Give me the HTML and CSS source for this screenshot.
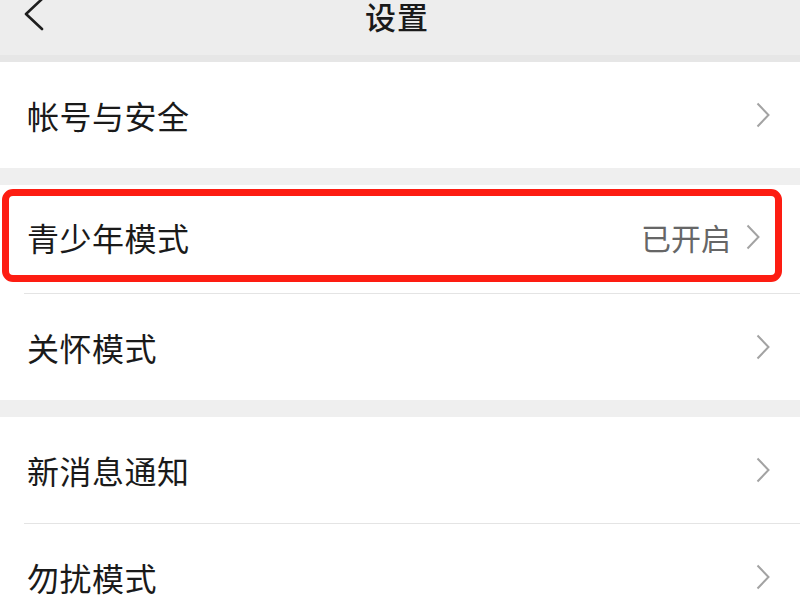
FILE: index.html
```html
<!DOCTYPE html>
<html lang="zh-CN">
<head>
    <meta charset="UTF-8">
    <meta name="viewport" content="width=device-width, initial-scale=1.0">
    <title>设置</title>
    <link rel="stylesheet" href="styles.css">
</head>
<body>
    <!-- Barra superior -->
    <header class="topbar">
        <svg class="back" width="20" height="34" viewBox="0 0 20 34">
            <polyline points="18,1 2,16 18,31" fill="none" stroke="#1e1e1e" stroke-width="2.6" stroke-linecap="round" stroke-linejoin="round"/>
        </svg>
        <h1>设置</h1>
    </header>

    <section class="group">
        <div class="row">
            <span class="label">帐号与安全</span>
            <svg class="arrow" width="14" height="26" viewBox="0 0 14 26"><polyline points="1.5,1.5 12.5,13 1.5,24.5" fill="none" stroke="#a3a3a3" stroke-width="2"/></svg>
        </div>
    </section>

    <section class="group">
        <div class="row row-marked">
            <span class="label">青少年模式</span>
            <span class="value">已开启</span>
            <svg class="arrow" width="14" height="26" viewBox="0 0 14 26"><polyline points="1.5,1.5 12.5,13 1.5,24.5" fill="none" stroke="#a3a3a3" stroke-width="2"/></svg>
            <div class="mark"></div>
        </div>
        <div class="row">
            <span class="label">关怀模式</span>
            <svg class="arrow" width="14" height="26" viewBox="0 0 14 26"><polyline points="1.5,1.5 12.5,13 1.5,24.5" fill="none" stroke="#a3a3a3" stroke-width="2"/></svg>
        </div>
    </section>

    <section class="group">
        <div class="row">
            <span class="label">新消息通知</span>
            <svg class="arrow" width="14" height="26" viewBox="0 0 14 26"><polyline points="1.5,1.5 12.5,13 1.5,24.5" fill="none" stroke="#a3a3a3" stroke-width="2"/></svg>
        </div>
        <div class="row">
            <span class="label">勿扰模式</span>
            <svg class="arrow" width="14" height="26" viewBox="0 0 14 26"><polyline points="1.5,1.5 12.5,13 1.5,24.5" fill="none" stroke="#a3a3a3" stroke-width="2"/></svg>
        </div>
    </section>
</body>
</html>
```

FILE: styles.css
```css
body {
    margin: 0;
    background-color: #efefef;
    font-family: "Noto Sans CJK SC", "Noto Sans", sans-serif;
    color: #1a1a1a;
    overflow: hidden;
}

.topbar {
    height: 55px;
    background-color: #ededed;
    border-bottom: 7px solid #e6e6e6;
    display: flex;
    align-items: flex-start;
    justify-content: center;
    position: relative;
}

.topbar .back {
    position: absolute;
    left: 24px;
    top: -2px;
}

.topbar h1 {
    margin: 0;
    font-size: 31px;
    font-weight: 500;
    line-height: 1;
    margin-left: -6px;
    letter-spacing: 1px;
}

.group {
    background-color: #ffffff;
    margin-bottom: 17px;
}

.row {
    height: 106px;
    display: flex;
    align-items: center;
    padding: 0 30px 0 27px;
    position: relative;
}

.row + .row {
    border-top: 1px solid #e4e4e4;
}

.row + .row::before {
    content: "";
    position: absolute;
    left: 0;
    top: -1px;
    width: 24px;
    height: 1px;
    background-color: #ffffff;
}

.label {
    font-size: 32px;
    flex: 1;
    letter-spacing: 0.5px;
}

.value {
    font-size: 30px;
    color: #666666;
    margin-right: 15px;
}

.arrow {
    flex-shrink: 0;
}

.row-marked {
    height: 108px;
    padding-right: 40px;
}

.row-marked .label,
.row-marked .value,
.row-marked .arrow {
    margin-top: -4px;
}

/* recuadro rojo de resaltado */
.mark {
    position: absolute;
    left: 2px;
    right: 18px;
    top: 4px;
    bottom: 11px;
    border: 7px solid #fd1d12;
    border-radius: 11px;
    pointer-events: none;
}
```
